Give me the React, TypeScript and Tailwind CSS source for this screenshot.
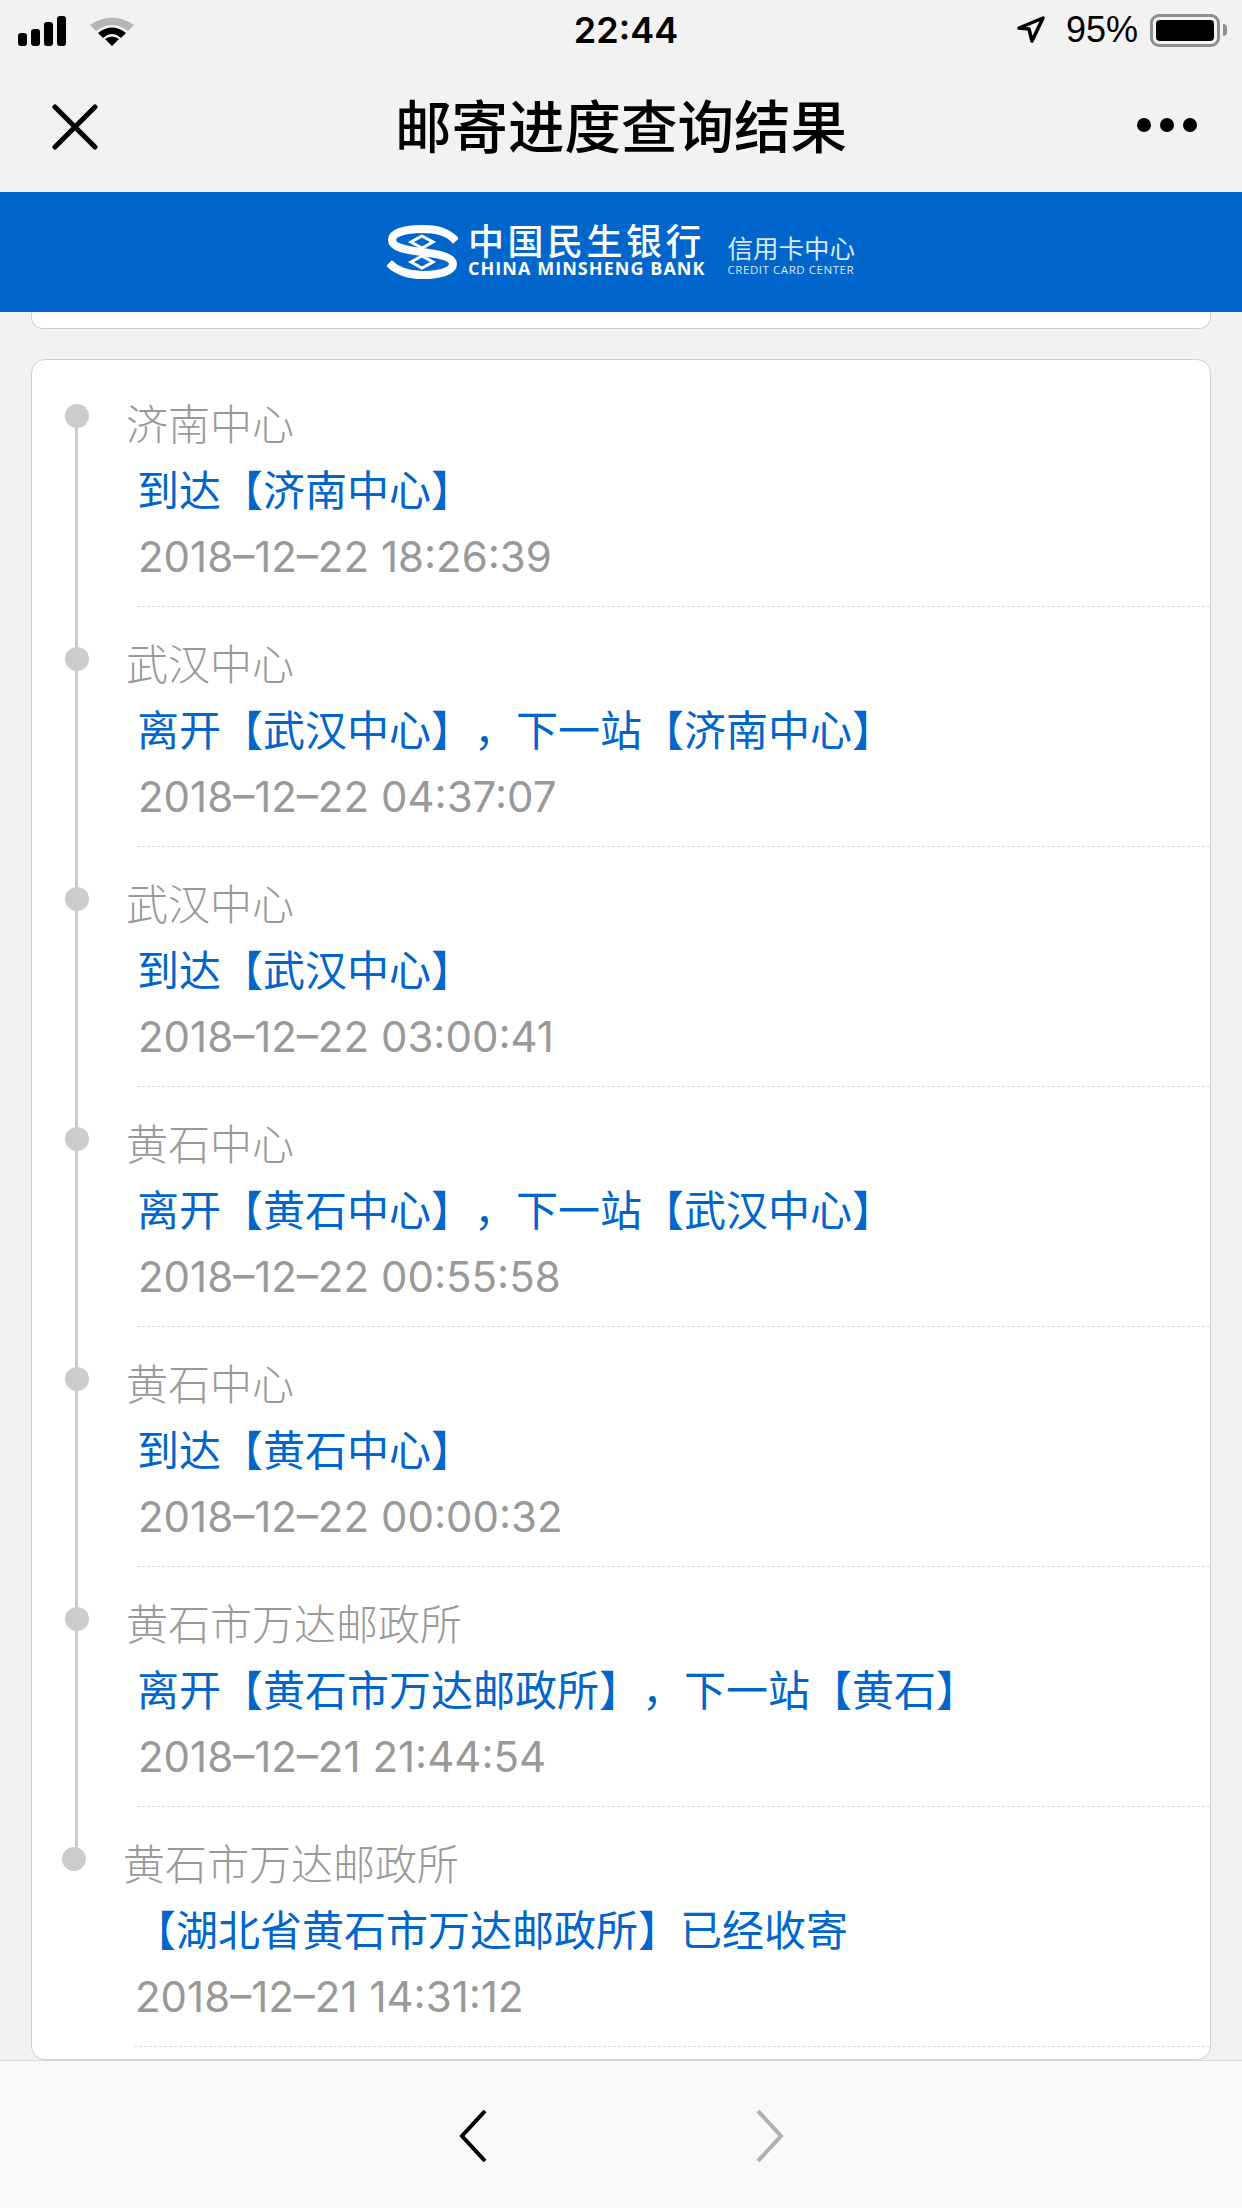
import React from 'react';

const steps = [
  { site: '济南中心', info: '到达【济南中心】', time: '2018–12–22 18:26:39' },
  { site: '武汉中心', info: '离开【武汉中心】，下一站【济南中心】', time: '2018–12–22 04:37:07' },
  { site: '武汉中心', info: '到达【武汉中心】', time: '2018–12–22 03:00:41' },
  { site: '黄石中心', info: '离开【黄石中心】，下一站【武汉中心】', time: '2018–12–22 00:55:58' },
  { site: '黄石中心', info: '到达【黄石中心】', time: '2018–12–22 00:00:32' },
  { site: '黄石市万达邮政所', info: '离开【黄石市万达邮政所】，下一站【黄石】', time: '2018–12–21 21:44:54' },
  { site: '黄石市万达邮政所', info: '【湖北省黄石市万达邮政所】已经收寄', time: '2018–12–21 14:31:12' },
];

const cjk = "font-['Liberation_Sans','Noto_Sans_CJK_SC',sans-serif]";

const SignalIcon = () => (
  <svg width="48" height="30" viewBox="0 0 48 30" fill="#000">
    <rect x="0" y="17" width="9" height="13" rx="3" />
    <rect x="13" y="13" width="9" height="17" rx="3" />
    <rect x="26" y="6" width="9" height="24" rx="3" />
    <rect x="39" y="0" width="9" height="30" rx="3" />
  </svg>
);

const WifiIcon = () => (
  <svg width="44" height="30" viewBox="0 0 44 30">
    <path d="M0 9 Q22 -6 44 9 L38 15 Q22 3 6 15 Z" fill="#b5b5b5" />
    <path d="M8 17 Q22 6 36 17 L31 22 Q22 14 13 22 Z" fill="#000" />
    <path d="M15 23 Q22 18 29 23 L22 30 Z" fill="#000" />
  </svg>
);

const BankMark = () => (
  <svg width="71" height="54" viewBox="0 0 71 54" fill="none">
    <path d="M69 16 C60 6 49 4 35 4 C17 4 5 8 5 15 C5 23 20 25 35 27 C51 29 66 32 66 39 C66 46 53 50 36 50 C22 50 11 47 2 38" stroke="#fff" strokeWidth="8" />
    <path d="M35 11 L46 17 L35 23 L24 17 Z" stroke="#fff" strokeWidth="3" />
    <path d="M35 31 L46 37 L35 43 L24 37 Z" stroke="#fff" strokeWidth="3" />
  </svg>
);

const Step: React.FC<{ site: string; info: string; time: string; index: number }> = ({ site, info, time, index }) => {
  const last = index === steps.length - 1;
  const first = index === 0;
  const [head, tail] = info.split('，');
  return (
    <li className={last ? 'relative -ml-[3px] pl-[105px]' : 'relative pl-[105px]'}>
      <span className={first ? 'absolute left-[33px] top-[37px] h-[24px] w-[24px] rounded-full bg-[#cccccc]' : 'absolute left-[33px] top-[40px] h-[24px] w-[24px] rounded-full bg-[#cccccc]'} />
      {!last && <span className="absolute left-[43px] top-[49px] h-[240px] w-[3px] bg-[#cccccc]" />}
      <div className="h-[240px] border-b border-dashed border-[#d8d8d8] pl-[3px] pt-[26px] leading-[66px]">
        <p className="-ml-[14px] text-[42px] font-light text-[#999999]">{site}</p>
        <p className="-ml-[3px] whitespace-nowrap text-[42px] text-[#0066cc]">
          {head}
          {tail && <span className="ml-[22px]">，</span>}
          {tail}
        </p>
        <p className="-ml-[2px] -mt-[1px] whitespace-nowrap font-['Inter',sans-serif] text-[42px] text-[#999999]">{time}</p>
      </div>
    </li>
  );
};

const App: React.FC = () => {
  return (
    <div className={`flex h-[2208px] w-[1242px] flex-col overflow-hidden bg-[#f2f2f2] ${cjk}`}>
      <header className="h-[192px] shrink-0">
        <div className="grid h-[60px] grid-cols-3 items-center">
          <div className="flex items-center gap-[24px] pl-[18px] pt-[1px]">
            <SignalIcon />
            <WifiIcon />
          </div>
          <div className="pl-[10px] text-center font-['Inter',sans-serif] text-[36px] font-semibold leading-none text-black">22:44</div>
          <div className="flex items-center justify-end pr-[15px] text-black">
            <svg width="28" height="28" viewBox="0 0 28 28" fill="none" stroke="#000" strokeWidth="3.5" strokeLinejoin="round">
              <path d="M2 12 L26 2 L15 25 L12 13 Z" />
            </svg>
            <span className="ml-[21px] text-[36px] leading-none">95%</span>
            <div className="ml-[12px] flex items-center">
              <div className="h-[33px] w-[70px] rounded-[9px] border-[3px] border-[#8e8e8e] p-[3px]">
                <div className="h-full w-full rounded-[4px] bg-black" />
              </div>
              <span className="ml-[3px] h-[12px] w-[4px] rounded-r-full bg-[#8e8e8e]" />
            </div>
          </div>
        </div>
        <div className="relative flex h-[132px] items-center justify-center">
          <svg className="absolute left-[52px] top-[44px]" width="46" height="46" viewBox="0 0 46 46" stroke="#000" strokeWidth="5" strokeLinecap="round">
            <path d="M3 3 L43 43 M43 3 L3 43" />
          </svg>
          <h1 className="translate-y-[3px] text-[56.5px] font-medium leading-none text-black">邮寄进度查询结果</h1>
          <div className="absolute right-[45px] top-[58px] flex gap-[9px]">
            <span className="h-[14px] w-[14px] rounded-full bg-black" />
            <span className="h-[14px] w-[14px] rounded-full bg-black" />
            <span className="h-[14px] w-[14px] rounded-full bg-black" />
          </div>
        </div>
      </header>

      <div className="flex h-[120px] shrink-0 items-center justify-center bg-[#0066cc] text-white">
        <BankMark />
        <div className="ml-[10px] pb-[3px]">
          <p className="text-[36px] font-medium leading-[32px] tracking-[3.5px]">中国民生银行</p>
          <p className="mt-[2px] whitespace-nowrap font-['Open_Sans',sans-serif] text-[18px] font-bold leading-[14px] tracking-[1.05px]">CHINA MINSHENG BANK</p>
        </div>
        <div className="ml-[22px] mt-[6px] text-[#dbe8f8]">
          <p className="text-[25.5px] leading-[30px]">信用卡中心</p>
          <p className="whitespace-nowrap font-['Open_Sans',sans-serif] text-[11.5px] leading-[12px] tracking-[0.55px]">CREDIT CARD CENTER</p>
        </div>
      </div>

      <div className="mx-[31px] h-[17px] shrink-0 rounded-b-[12px] border border-t-0 border-[#d0d0d0] bg-white" />

      <main className="mx-[31px] mt-[30px] h-[1701px] shrink-0 overflow-hidden rounded-[14px] border border-[#d0d0d0] bg-white pt-[7px]">
        <ul>
          {steps.map((s, i) => (
            <Step key={i} index={i} {...s} />
          ))}
        </ul>
      </main>

      <footer className="flex-1 border-t border-[#d8d8d8] bg-[#f9f9fb]">
        <nav className="relative h-full w-full">
          <svg className="absolute left-[459px] top-[49px]" width="28" height="52" viewBox="0 0 28 52" fill="none" stroke="#000" strokeWidth="4">
            <path d="M26 1 L3 26 L26 51" />
          </svg>
          <svg className="absolute left-[756px] top-[49px]" width="28" height="52" viewBox="0 0 28 52" fill="none" stroke="#b0b0b0" strokeWidth="4">
            <path d="M2 1 L25 26 L2 51" />
          </svg>
        </nav>
      </footer>
    </div>
  );
};

export default App;
